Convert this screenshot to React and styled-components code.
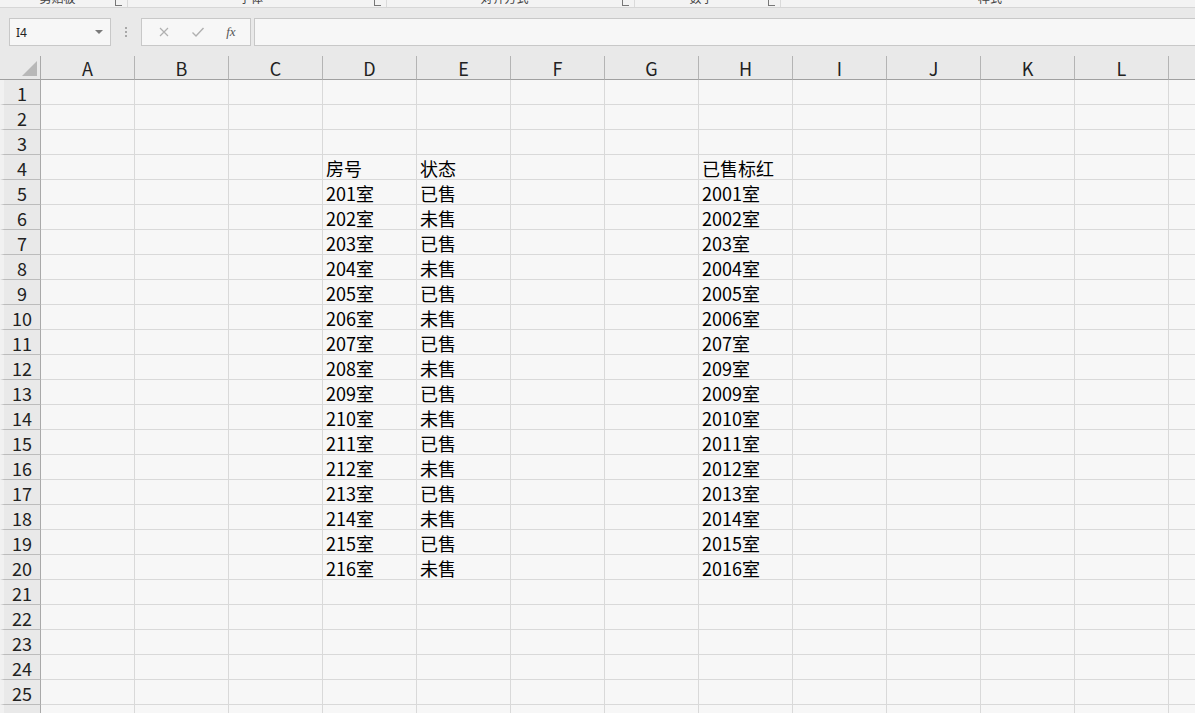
import React from "react";
import styled, { createGlobalStyle } from "styled-components";

const GlobalStyle = createGlobalStyle`
  html, body { margin: 0; padding: 0; background: #f7f7f7; overflow: hidden; }
  body { font-family: "Noto Sans CJK SC", "Noto Sans", sans-serif; color: #000; }
`;

const Page = styled.div`
  width: 1195px;
  height: 713px;
  overflow: hidden;
  display: flex;
  flex-direction: column;
`;

const RibbonStub = styled.div`
  height: 7px;
  flex: none;
  background: #f3f3f3;
  border-bottom: 1px solid #d6d6d6;
  overflow: hidden;
  display: flex;
  align-items: flex-end;
`;

const RibbonGroup = styled.div`
  flex: none;
  width: ${(p) => p.w}px;
  height: 7px;
  display: flex;
  align-items: flex-end;
  border-right: 1px solid #dadada;
`;

const RibbonLabel = styled.span`
  flex: 1;
  text-align: center;
  font-size: 12px;
  line-height: 12px;
  margin-bottom: 3px;
  color: #444;
  white-space: nowrap;
`;

const Launcher = styled.span`
  flex: none;
  width: 7px;
  height: 6px;
  margin: 0 5px 1px 0;
  border-left: 1px solid #777;
  border-bottom: 1px solid #777;
  box-sizing: border-box;
`;

const FormulaArea = styled.div`
  flex: none;
  background: #e9e9e9;
  padding: 10px 0 10px 9px;
  display: flex;
  align-items: center;
`;

const NameBox = styled.div`
  width: 102px;
  height: 28px;
  box-sizing: border-box;
  border: 1px solid #c8c8c8;
  background: #f7f7f7;
  display: flex;
  align-items: center;
  justify-content: space-between;
  padding: 0 7px 0 6px;
  font-family: "Noto Sans", "Liberation Sans", sans-serif;
  font-size: 12px;
  color: #222;
`;

const Caret = styled.span`
  width: 0;
  height: 0;
  border-left: 4px solid transparent;
  border-right: 4px solid transparent;
  border-top: 4px solid #7a7a7a;
`;

const Dots = styled.div`
  width: 30px;
  display: flex;
  flex-direction: column;
  align-items: center;
  gap: 2px;
  span {
    width: 2px;
    height: 2px;
    background: #a8a8a8;
  }
`;

const FxBox = styled.div`
  width: 110px;
  height: 28px;
  box-sizing: border-box;
  border: 1px solid #c8c8c8;
  background: #f7f7f7;
  display: flex;
  align-items: center;
  justify-content: space-around;
  padding: 0 4px 0 6px;
`;

const FxIcon = styled.span`
  font-family: "Liberation Serif", "DejaVu Serif", serif;
  font-style: italic;
  font-size: 13px;
  color: #555;
`;

const FormulaInput = styled.div`
  flex: 1;
  margin-left: 3px;
  height: 28px;
  box-sizing: border-box;
  border: 1px solid #c8c8c8;
  border-right: none;
  background: #f7f7f7;
`;

const Sheet = styled.div`
  flex: 1;
  display: grid;
  grid-template-columns: 41px repeat(13, 94px);
  grid-template-rows: 24px;
  grid-auto-rows: 25px;
  overflow: hidden;
`;

const Corner = styled.div`
  background: #e9e9e9;
  border-right: 1px solid #a9a9a9;
  border-bottom: 1px solid #a0a0a0;
  box-sizing: border-box;
  display: flex;
  align-items: flex-end;
  justify-content: flex-end;
  padding: 0 3px 3px 0;
`;

const ColHead = styled.div`
  background: #e9e9e9;
  border-right: 1px solid #b4b4b4;
  border-bottom: 1px solid #a0a0a0;
  box-sizing: border-box;
  display: flex;
  align-items: center;
  justify-content: center;
  font-size: 18px;
  color: #222;
  padding-top: 1px;
`;

const RowHead = styled.div`
  background: #e9e9e9;
  border-left: 4px solid #f1f1f1;
  border-right: 1px solid #a9a9a9;
  border-bottom: 1px solid #bcbcbc;
  box-sizing: border-box;
  display: flex;
  align-items: center;
  justify-content: center;
  font-size: 18px;
  color: #222;
  padding-top: 1px;
`;

const Cell = styled.div`
  background: #f7f7f7;
  border-right: 1px solid #d9d9d9;
  border-bottom: 1px solid #d9d9d9;
  box-sizing: border-box;
  display: flex;
  align-items: flex-end;
  padding: 0 0 0 3px;
  font-size: 18px;
  line-height: 22px;
  white-space: nowrap;
  color: #000;
`;

const columns = ["A", "B", "C", "D", "E", "F", "G", "H", "I", "J", "K", "L", ""];

const hList = [
  "2001室", "2002室", "203室", "2004室", "2005室", "2006室", "207室", "209室",
  "2009室", "2010室", "2011室", "2012室", "2013室", "2014室", "2015室", "2016室",
];

function cellValue(row, col) {
  if (row === 4) {
    if (col === "D") return "房号";
    if (col === "E") return "状态";
    if (col === "H") return "已售标红";
  }
  if (row >= 5 && row <= 20) {
    const i = row - 5;
    if (col === "D") return `${201 + i}室`;
    if (col === "E") return i % 2 === 0 ? "已售" : "未售";
    if (col === "H") return hList[i];
  }
  return "";
}

const ribbonGroups = [
  { w: 127, label: "剪贴板", launcher: true },
  { w: 258, label: "字体", launcher: true },
  { w: 247, label: "对齐方式", launcher: true },
  { w: 145, label: "数字", launcher: true },
  { w: 418, label: "样式", launcher: false },
];

export default function App() {
  const rows = Array.from({ length: 26 }, (_, i) => i + 1);
  return (
    <Page>
      <GlobalStyle />
      <RibbonStub>
        {ribbonGroups.map((g) => (
          <RibbonGroup key={g.label} w={g.w}>
            <RibbonLabel>{g.label}</RibbonLabel>
            {g.launcher && <Launcher />}
          </RibbonGroup>
        ))}
      </RibbonStub>
      <FormulaArea>
        <NameBox>
          <span>I4</span>
          <Caret />
        </NameBox>
        <Dots>
          <span />
          <span />
          <span />
        </Dots>
        <FxBox>
          <svg width="12" height="12" viewBox="0 0 12 12">
            <path d="M2 2 L10 10 M10 2 L2 10" stroke="#b0b0b0" strokeWidth="1.2" fill="none" />
          </svg>
          <svg width="14" height="12" viewBox="0 0 14 12">
            <path d="M1.5 6.5 L5 10 L12.5 2" stroke="#b0b0b0" strokeWidth="1.4" fill="none" />
          </svg>
          <FxIcon>fx</FxIcon>
        </FxBox>
        <FormulaInput />
      </FormulaArea>
      <Sheet>
        <Corner>
          <svg width="15" height="15" viewBox="0 0 15 15">
            <polygon points="15,0 15,15 0,15" fill="#b8b8b8" />
          </svg>
        </Corner>
        {columns.map((c, i) => (
          <ColHead key={"h" + i}>{c}</ColHead>
        ))}
        {rows.map((r) => (
          <React.Fragment key={r}>
            <RowHead>{r}</RowHead>
            {columns.map((c, i) => (
              <Cell key={r + "-" + i}>{c ? cellValue(r, c) : ""}</Cell>
            ))}
          </React.Fragment>
        ))}
      </Sheet>
    </Page>
  );
}
